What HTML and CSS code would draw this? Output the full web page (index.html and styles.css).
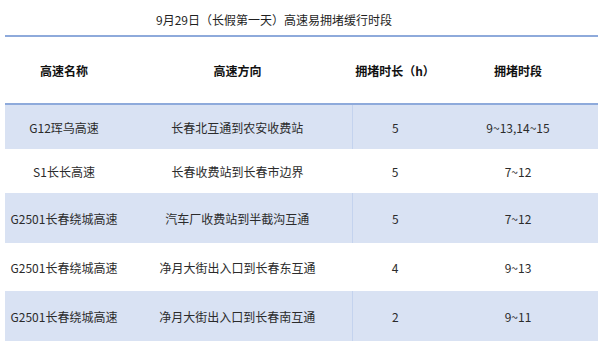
FILE: index.html
```html
<!DOCTYPE html>
<html lang="zh-CN">
<head>
<meta charset="utf-8">
<link rel="stylesheet" href="styles.css">
</head>
<body>
<div class="title">9月29日（长假第一天）高速易拥堵缓行时段</div>
<table class="grid">
  <colgroup>
    <col class="c1"><col class="c2"><col class="c3"><col class="c4">
  </colgroup>
  <thead>
    <tr><th>高速名称</th><th>高速方向</th><th>拥堵时长（h）</th><th>拥堵时段</th></tr>
  </thead>
  <tbody>
    <tr class="shade r1"><td>G12珲乌高速</td><td class="div">长春北互通到农安收费站</td><td>5</td><td>9~13,14~15</td></tr>
    <tr class="r2"><td>S1长长高速</td><td>长春收费站到长春市边界</td><td>5</td><td>7~12</td></tr>
    <tr class="shade r3"><td>G2501长春绕城高速</td><td class="div">汽车厂收费站到半截沟互通</td><td>5</td><td>7~12</td></tr>
    <tr class="r4"><td>G2501长春绕城高速</td><td>净月大街出入口到长春东互通</td><td>4</td><td>9~13</td></tr>
    <tr class="shade r5"><td>G2501长春绕城高速</td><td class="div">净月大街出入口到长春南互通</td><td>2</td><td>9~11</td></tr>
  </tbody>
</table>
</body>
</html>
```

FILE: styles.css
```css
html, body {
  margin: 0;
  padding: 0;
  background: #ffffff;
}
body {
  font-family: "Noto Sans CJK SC", "Noto Sans", sans-serif;
  font-size: 12px;
  color: #2b2b2b;
  width: 600px;
  height: 342px;
  overflow: hidden;
}
.title {
  box-sizing: border-box;
  height: 35px;
  padding: 6px 0 0 156px;
  line-height: 28px;
  color: #1f1f1f;
  white-space: nowrap;
}
.grid {
  margin-left: 5px;
  width: 593px;
  border-collapse: collapse;
  table-layout: fixed;
  border-top: 2px solid #8eaadb;
}
.c1 { width: 118px; }
.c2 { width: 229px; }
.c3 { width: 86px; }
.c4 { width: 160px; }
.grid th {
  height: 66px;
  padding: 0;
  font-weight: bold;
  color: #111111;
  text-align: center;
  border-bottom: 2px solid #8eaadb;
}
.grid td {
  padding: 0;
  text-align: center;
  white-space: nowrap;
}
.shade td { background: #d9e2f3; }
.shade td.div { border-right: 1px solid #c4d3ee; }
.r1 td { height: 44px; }
.r2 td { height: 44px; }
.r3 td { height: 50px; }
.r4 td { height: 48px; }
.r5 td { height: 50px; }
```
